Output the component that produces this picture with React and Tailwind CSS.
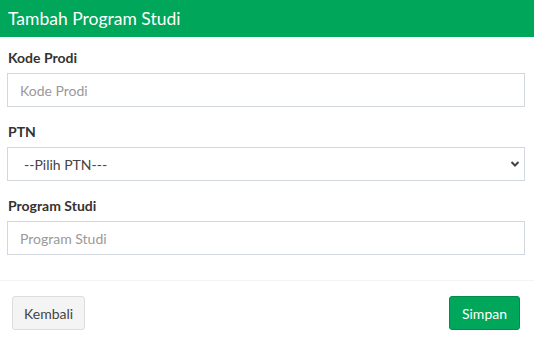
import React from 'react';

const Field = ({ label, children }) => (
  <div className="mb-[15px]">
    <label className="block text-[14px] leading-[20px] font-bold text-[#333] mb-[5px] pl-px">{label}</label>
    {children}
  </div>
);

const TextInput = ({ placeholder }) => (
  <input
    type="text"
    placeholder={placeholder}
    className="block w-full h-[34px] border border-[#d2d6de] bg-white px-[12px] text-[14px] text-[#555] placeholder:text-[#999] outline-none"
  />
);

export default function App() {
  return (
    <div className="w-[534px] h-[344px] bg-white" style={{ fontFamily: 'Lato, "Open Sans", sans-serif' }}>
      <div className="h-[37px] bg-[#00a65a] flex items-center px-[8px]">
        <h3 className="text-white text-[17.5px] leading-none">Tambah Program Studi</h3>
      </div>

      <form>
        <div className="pt-[11px] pl-[7px] pr-[9px] pb-[10px]">
          <Field label="Kode Prodi">
            <TextInput placeholder="Kode Prodi" />
          </Field>

          <Field label="PTN">
            <div className="relative">
              <select className="block w-full h-[34px] border border-[#d2d6de] bg-white pl-[16px] pr-[30px] text-[14px] text-[#444] appearance-none outline-none">
                <option>--Pilih PTN---</option>
              </select>
              <svg
                className="absolute right-[5px] top-[13px] pointer-events-none"
                width="10"
                height="8"
                viewBox="0 0 10 8"
              >
                <polyline points="1.5,2 5,5.5 8.5,2" fill="none" stroke="#444" strokeWidth="2" />
              </svg>
            </div>
          </Field>

          <Field label="Program Studi">
            <TextInput placeholder="Program Studi" />
          </Field>
        </div>

        <div className="border-t border-[#f4f4f4] pt-[15px] pl-[12px] pr-[14px] flex justify-between">
          <button type="button" className="h-[34px] px-[11px] rounded-[3px] border border-[#ddd] bg-[#f4f4f4] text-[#444] text-[14px]">
            Kembali
          </button>
          <button type="submit" className="h-[34px] px-[12px] rounded-[3px] border border-[#008d4c] bg-[#00a65a] text-white text-[14px]">
            Simpan
          </button>
        </div>
      </form>
    </div>
  );
}
